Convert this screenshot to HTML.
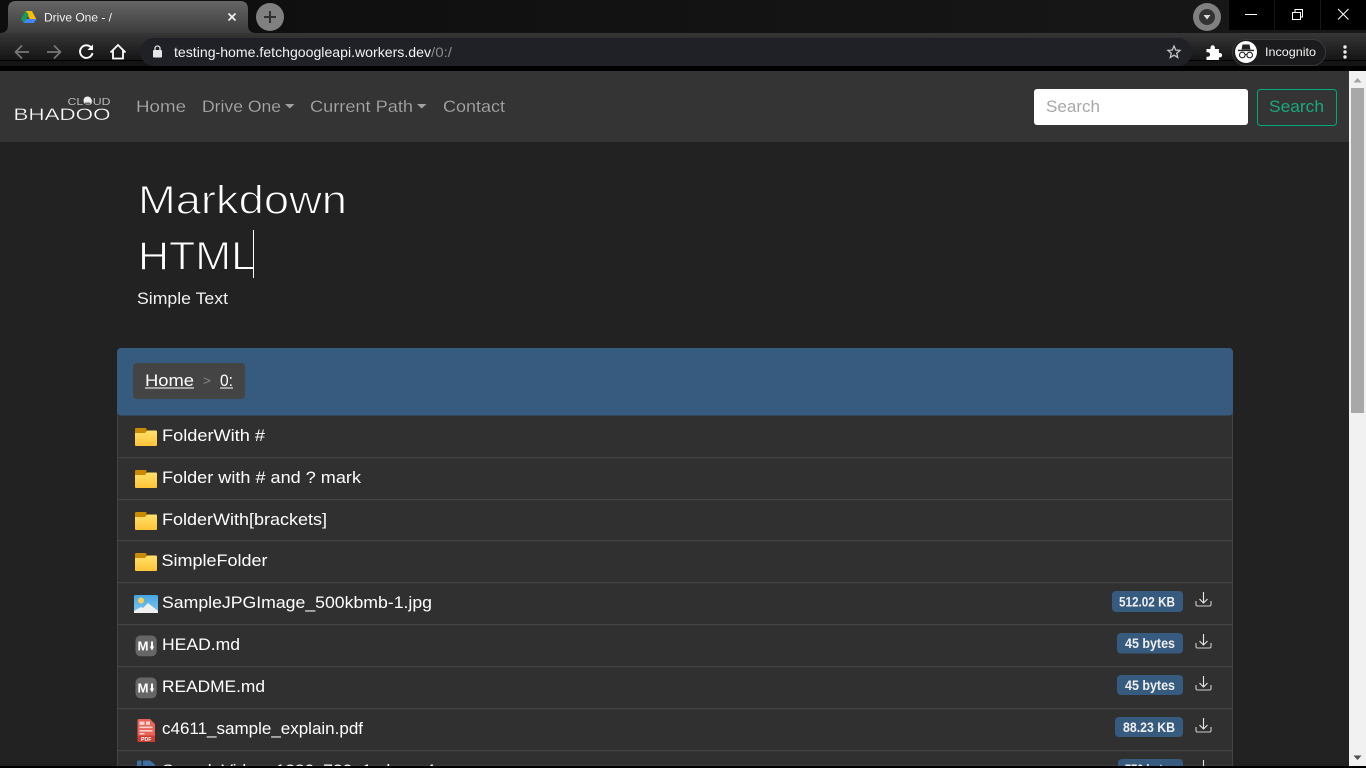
<!DOCTYPE html>
<html lang="en"><head><meta charset="utf-8"><title>Drive One - /</title>
<style>
html,body{margin:0;padding:0;background:#222;overflow:hidden;width:1366px;height:768px}
svg{display:block}
text{font-family:"Liberation Sans",sans-serif}
</style></head><body>
<svg width="1366" height="768" viewBox="0 0 1366 768" xmlns="http://www.w3.org/2000/svg">
<defs>
<linearGradient id="tab" x1="0" y1="0" x2="0" y2="1"><stop offset="0" stop-color="#666"/><stop offset="1" stop-color="#3b3b3b"/></linearGradient>
<linearGradient id="tb" x1="0" y1="0" x2="0" y2="1"><stop offset="0" stop-color="#363636"/><stop offset="1" stop-color="#151515"/></linearGradient>
<linearGradient id="strip" x1="0" y1="0" x2="1" y2="0"><stop offset="0" stop-color="#0d0d0d"/><stop offset="1" stop-color="#181818"/></linearGradient>
<linearGradient id="fold" x1="0" y1="0" x2="0" y2="1"><stop offset="0" stop-color="#ffe06c"/><stop offset="1" stop-color="#ffc437"/></linearGradient>
<linearGradient id="sky" x1="0" y1="0" x2="0" y2="1"><stop offset="0" stop-color="#45a5e2"/><stop offset="1" stop-color="#80c8ef"/></linearGradient>
<g id="folder"><rect x="135" y="0" width="11.500" height="6" rx="1" fill="#c98a00"/><path d="M135 5H145L147 2.500H156q1 0 1 1V17q0 1-1 1H136q-1 0-1-1z" fill="url(#fold)"/></g>
<g id="dl" fill="none" stroke="#e8e8e8" stroke-width="1.100"><path d="M1203.500 592v10.500M1199.500 599l4 4 4-4"/><path d="M1196 601v3.500q0 1.500 1.500 1.500h12q1.500 0 1.500-1.500V601" stroke="#ccc"/></g>
<g id="md"><rect x="135.500" y="0" width="21.200" height="20.800" rx="5" fill="#666"/><text x="137.500" y="15.200" font-size="13" font-weight="700" fill="#fff" textLength="11" lengthAdjust="spacingAndGlyphs">M</text><path d="M152 6v5.500" stroke="#fff" stroke-width="2"/><path d="M149.800 11h4.400l-2.200 4z" fill="#fff"/></g>
</defs>

<!-- chrome -->
<rect width="1366" height="33" fill="url(#strip)"/>
<rect x="1229" y="0" width="137" height="30" fill="#000"/>
<path d="M1274.500 0v30M1320.500 0v30" stroke="#161616"/>
<rect y="33" width="1366" height="27" fill="url(#tb)"/>
<rect y="60" width="1366" height="1" fill="#000"/>
<rect y="61" width="1366" height="5" fill="#141414"/>
<rect y="66" width="1366" height="5" fill="#000"/>
<path d="M0 33q8 0 8-8V9q0-8 8-8h224q8 0 8 8v16q0 8 8 8z" fill="url(#tab)"/>
<path d="M25.500 11h6.500l4.500 8.500h-6.500z" fill="#fbbc05"/>
<path d="M25.500 11l-4.500 8 2.700 4 5-8.500z" fill="#0f9d58"/>
<path d="M26 19h10.500l-2.700 4H23.700z" fill="#4285f4"/>
<text x="44" y="21.500" font-size="12" fill="#f1f1f1" textLength="68" lengthAdjust="spacingAndGlyphs">Drive One - /</text>
<path d="M228.500 13.500l7 7M235.500 13.500l-7 7" stroke="#f0f0f0" stroke-width="1.700"/>
<circle cx="270" cy="17" r="14" fill="#808080"/>
<path d="M270 11v12M264 17h12" stroke="#303030" stroke-width="2"/>
<circle cx="1207" cy="17" r="14" fill="#808080"/>
<circle cx="1207" cy="17" r="8" fill="#333"/>
<path d="M1203.500 15h7l-3.500 4.500z" fill="#ddd"/>
<path d="M1245 14.500h12" stroke="#fff" stroke-width="1"/>
<path d="M1292.500 12.500h8v7h-8zM1295 12v-2.500h7.500v7.500h-2" fill="none" stroke="#fff" stroke-width="1"/>
<path d="M1338 9l10.500 10.500M1348.500 9L1338 19.500" stroke="#fff" stroke-width="1"/>

<g fill="none" stroke="#777" stroke-width="1.700"><path d="M29 52H16M22 45.500L15.500 52l6.500 6.500"/><path d="M47 52h13M54 45.500l6.500 6.500-6.500 6.500"/></g>
<path d="M91.500 48a6.300 6.300 0 1 0 1 5" fill="none" stroke="#fff" stroke-width="1.900"/><path d="M93 44.500v5.500h-5.500z" fill="#fff"/>
<path d="M110.500 52.500l7.500-7.500 7.500 7.500M113 50.500v8h10v-8" fill="none" stroke="#fff" stroke-width="1.800"/>
<rect x="140" y="38" width="1052" height="28" rx="14" fill="#1f2126"/>
<rect x="153" y="50" width="9" height="7.500" rx="1" fill="#e6e6e6"/><path d="M155 50.500v-2a2.500 2.500 0 0 1 5 0v2" fill="none" stroke="#e6e6e6" stroke-width="1.300"/>
<text x="174" y="57" font-size="14" fill="#f2f2f2" textLength="257" lengthAdjust="spacingAndGlyphs">testing-home.fetchgoogleapi.workers.dev</text>
<text x="431" y="57" font-size="14" fill="#8a8a8a" textLength="21" lengthAdjust="spacingAndGlyphs">/0:/</text>
<path d="M1174 46l1.700 4 4.300.4-3.300 2.800 1 4.300-3.700-2.300-3.700 2.300 1-4.300-3.300-2.800 4.300-.4z" fill="none" stroke="#c4c4c4" stroke-width="1.300"/>
<path d="M1206.500 49h4v-1.500a2.200 2.200 0 0 1 4.400 0V49h4v4h1a2.200 2.200 0 0 1 0 4.400h-1v2.600h-12.400v-3.200h1.300a2.300 2.300 0 0 0 0-4.600h-1.300z" fill="#fff"/>
<rect x="1232.500" y="39.500" width="93" height="26" rx="13" fill="#1b1b1d" stroke="#3a3a3c"/>
<circle cx="1246" cy="52" r="11" fill="#fff"/>
<path d="M1241.500 49.500l1-5h7l1 5zM1238 49.700h16v1.400h-16z" fill="#222"/>
<circle cx="1242.300" cy="55" r="2.800" fill="none" stroke="#222" stroke-width="1.100"/><circle cx="1249.700" cy="55" r="2.800" fill="none" stroke="#222" stroke-width="1.100"/><path d="M1245 54.500h2" stroke="#222"/>
<text x="1265" y="56" font-size="12" fill="#f4f4f4" textLength="51" lengthAdjust="spacingAndGlyphs">Incognito</text>
<circle cx="1345" cy="47" r="1.700" fill="#eee"/><circle cx="1345" cy="52" r="1.700" fill="#eee"/><circle cx="1345" cy="57" r="1.700" fill="#eee"/>

<!-- page -->
<rect y="71" width="1349" height="695" fill="#222"/>
<rect y="71" width="1349" height="71" fill="#343434"/>

<text x="67.500" y="105" font-size="10.500" fill="#b8b8b8" textLength="43" lengthAdjust="spacingAndGlyphs">CLOUD</text>
<circle cx="87.500" cy="100.500" r="4" fill="#eee"/><rect x="85" y="102.500" width="5" height="2" fill="#666"/>
<text x="13.500" y="120" font-size="16.500" fill="#fff" stroke="#343434" stroke-width=".3" textLength="97" lengthAdjust="spacingAndGlyphs">BHADOO</text>

<g font-size="17" fill="#a8a8a8" stroke="#343434" stroke-width=".15">
<text x="136" y="112" textLength="50" lengthAdjust="spacingAndGlyphs">Home</text>
<text x="202" y="112" textLength="79" lengthAdjust="spacingAndGlyphs">Drive One</text>
<text x="310" y="112" textLength="103" lengthAdjust="spacingAndGlyphs">Current Path</text>
<text x="443" y="112" textLength="62" lengthAdjust="spacingAndGlyphs">Contact</text>
</g>
<path d="M285 104h9.500l-4.750 4.500zM417 104h9.500l-4.750 4.500z" fill="#a0a0a0"/>

<rect x="1034" y="89" width="214" height="36" rx="3" fill="#fff"/>
<text x="1046" y="112" font-size="17" fill="#a8a8a8" textLength="54" lengthAdjust="spacingAndGlyphs">Search</text>
<rect x="1257.500" y="89.500" width="79" height="36" rx="3" fill="none" stroke="#00a87e"/>
<text x="1269" y="112" font-size="17" fill="#1aa87e" textLength="55" lengthAdjust="spacingAndGlyphs">Search</text>

<g font-size="39.500" fill="#fff" stroke="#222" stroke-width="1">
<text x="138" y="213.500" textLength="209" lengthAdjust="spacingAndGlyphs">Markdown</text>
<text x="138" y="269.500" textLength="117" lengthAdjust="spacingAndGlyphs">HTML</text>
</g>
<rect x="253" y="230" width="1" height="48" fill="#fff"/>
<text x="137" y="304" font-size="16.500" fill="#f2f2f2" textLength="91" lengthAdjust="spacingAndGlyphs">Simple Text</text>

<!-- list -->
<rect x="117.500" y="410" width="1115" height="356" fill="#303030" stroke="#444"/>
<rect x="117" y="348" width="1116" height="67.500" rx="4" fill="#375a7f"/>
<rect x="133" y="363" width="112" height="36" rx="4" fill="#444"/>
<text x="145" y="386" font-size="17" fill="#fff" textLength="49" lengthAdjust="spacingAndGlyphs">Home</text>
<rect x="145" y="387.500" width="49" height="1" fill="#fff"/>
<text x="203" y="385" font-size="13" fill="#888" textLength="8" lengthAdjust="spacingAndGlyphs">&gt;</text>
<text x="220" y="386" font-size="17" fill="#fff" textLength="13" lengthAdjust="spacingAndGlyphs">0:</text>
<rect x="220" y="387.500" width="13" height="1" fill="#fff"/>

<g fill="#444">
<rect x="118" y="457" width="1114" height="1.200"/><rect x="118" y="499" width="1114" height="1.200"/><rect x="118" y="540" width="1114" height="1.200"/><rect x="118" y="582" width="1114" height="1.200"/><rect x="118" y="624" width="1114" height="1.200"/><rect x="118" y="666" width="1114" height="1.200"/><rect x="118" y="708" width="1114" height="1.200"/><rect x="118" y="750" width="1114" height="1.200"/>
</g>

<use href="#folder" y="428"/><use href="#folder" y="470"/><use href="#folder" y="512"/><use href="#folder" y="553"/>

<g font-size="17" fill="#fff">
<text x="162" y="441" textLength="103" lengthAdjust="spacingAndGlyphs">FolderWith #</text>
<text x="162" y="483" textLength="199" lengthAdjust="spacingAndGlyphs">Folder with # and ? mark</text>
<text x="162" y="525" textLength="165" lengthAdjust="spacingAndGlyphs">FolderWith[brackets]</text>
<text x="161.500" y="566" textLength="106" lengthAdjust="spacingAndGlyphs">SimpleFolder</text>
<text x="162" y="608" textLength="270" lengthAdjust="spacingAndGlyphs">SampleJPGImage_500kbmb-1.jpg</text>
<text x="162" y="650" textLength="78" lengthAdjust="spacingAndGlyphs">HEAD.md</text>
<text x="162" y="692" textLength="103" lengthAdjust="spacingAndGlyphs">README.md</text>
<text x="162" y="734" textLength="201" lengthAdjust="spacingAndGlyphs">c4611_sample_explain.pdf</text>
<text x="162" y="776" textLength="273" lengthAdjust="spacingAndGlyphs">SampleVideo_1280x720_1mb.mp4</text>
</g>

<!-- file icons -->
<rect x="134" y="595" width="24" height="18" rx="1.500" fill="url(#sky)"/>
<circle cx="141" cy="600.500" r="3" fill="#ffd24d"/>
<path d="M134 613v-2l7-4 2 1 5-5 10 8v2z" fill="#f0f0f0"/>
<use href="#md" y="635.500"/><use href="#md" y="677.500"/>
<path d="M137.500 720.500q0-1.500 1.500-1.500h11l5 5v16.500q0 1.500-1.500 1.500h-14.500q-1.500 0-1.500-1.500z" fill="#e8635a"/>
<path d="M139.500 721.500h5v3.500h-5zM146 721.500h4v3.500h-4zM139.500 726.500h13v1.600h-13zM139.500 730h13v1.600h-13zM139.500 733h5v1.500h-5z" fill="#f9d0cc"/>
<rect x="137.500" y="735.500" width="17.500" height="6.500" rx="1" fill="#cf3d32"/>
<text x="141" y="741" font-size="5.500" font-weight="700" fill="#fff" textLength="10.500" lengthAdjust="spacingAndGlyphs">PDF</text>
<path d="M137 762q0-1.500 1.500-1.500h3v6h-4.500zM143 760.500h7l5 4v2h-12z" fill="#3f6f9f"/>

<!-- badges -->
<g fill="#375a7f">
<rect x="1112" y="591" width="71" height="21" rx="4"/><rect x="1117" y="633" width="66" height="20.500" rx="4"/><rect x="1117" y="675" width="66" height="20" rx="4"/><rect x="1115" y="717" width="68" height="20" rx="4"/><rect x="1118" y="759" width="65" height="20" rx="4"/>
</g>
<g font-size="13.500" font-weight="700" fill="#f0f0f0">
<text x="1119" y="606.500" textLength="56" lengthAdjust="spacingAndGlyphs">512.02 KB</text>
<text x="1125" y="648" textLength="50" lengthAdjust="spacingAndGlyphs">45 bytes</text>
<text x="1125" y="690" textLength="50" lengthAdjust="spacingAndGlyphs">45 bytes</text>
<text x="1123" y="732" textLength="52" lengthAdjust="spacingAndGlyphs">88.23 KB</text>
<text x="1125" y="774" textLength="50" lengthAdjust="spacingAndGlyphs">770 bytes</text>
</g>
<use href="#dl"/><use href="#dl" y="42"/><use href="#dl" y="84"/><use href="#dl" y="126"/><use href="#dl" y="168"/>

<!-- scrollbar -->
<rect x="1349" y="71" width="17" height="695" fill="#f1f1f1"/>
<rect x="1351" y="88" width="13" height="325" fill="#a8a8a8"/>
<path d="M1353.500 82.500h8l-4-4.500z" fill="#a3a3a3"/>
<path d="M1353.500 755.500h8l-4 4.500z" fill="#505050"/>
<rect y="766" width="1366" height="2" fill="#000"/>
</svg>
</body></html>
